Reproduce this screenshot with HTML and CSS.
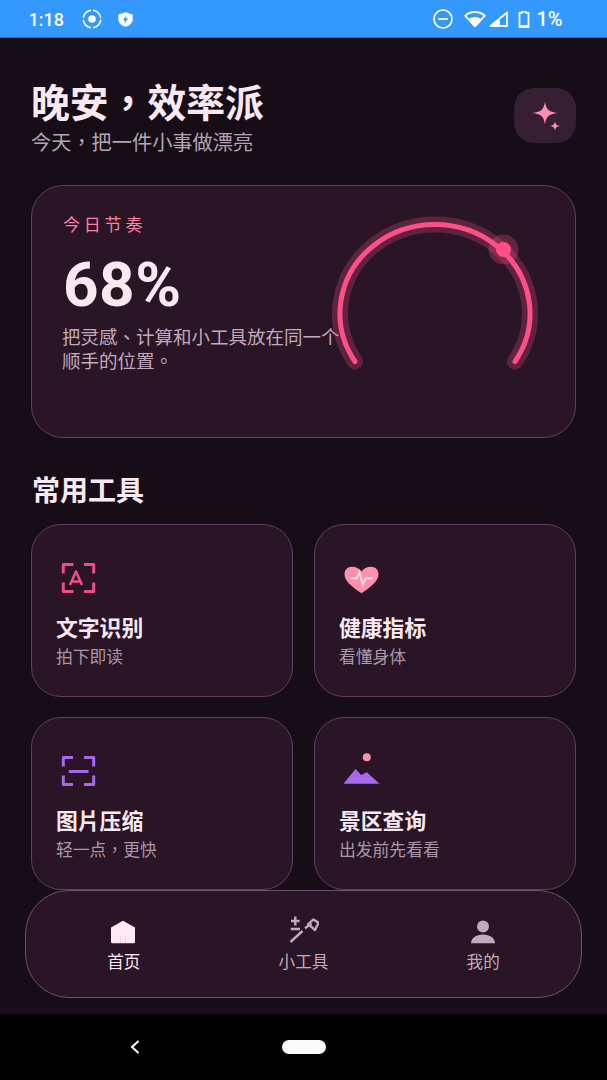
FILE: index.html
```html
<!DOCTYPE html>
<html lang="zh-TW">
<head>
<meta charset="utf-8">
<title>首页</title>
<link rel="stylesheet" href="styles.css">
</head>
<body>
<div class="phone">
  <header class="status">
    <div class="status-left">
      <span class="time">1:18</span>
      <svg class="ic-rec" width="20" height="20" viewBox="0 0 20 20"><circle cx="10" cy="10" r="3.8" fill="#fff"/><circle cx="10" cy="10" r="8.8" fill="none" stroke="#fff" stroke-width="1.6" stroke-dasharray="11.8 2" stroke-dashoffset="-1"/></svg>
      <svg class="ic-shield" width="15" height="15" viewBox="0 0 15 15"><path d="M7.500.3 14.700 2.600V7.500C14.700 11 11.500 13.700 7.500 14.800 3.500 13.700.3 11 .3 7.500V2.600Z" fill="#fff"/><path d="M8.500 3.200 4.800 8.200H7L6.300 11.900 10.200 6.600H7.800Z" fill="#3399ff"/></svg>
    </div>
    <div class="status-right">
      <svg width="20" height="20" viewBox="0 0 20 20"><circle cx="10" cy="10" r="9" fill="none" stroke="#fff" stroke-width="1.700"/><rect x="5.200" y="9.100" width="9.600" height="1.800" fill="#fff"/></svg>
      <svg class="ic-wifi" width="22" height="16" viewBox="0 0 22 16"><path d="M11 15.500 1.200 4.600C3.800 2.300 7.200 1 11 1S18.200 2.300 20.800 4.600Z" fill="none" stroke="#fff" stroke-width="1.800" stroke-linejoin="round"/><path d="M11 15.500 4.700 8.300C6.400 6.900 8.600 6.100 11 6.100S15.600 6.900 17.300 8.300Z" fill="#fff"/></svg>
      <svg class="ic-signal" width="19" height="16" viewBox="0 0 19 16"><path d="M18 1.500V15H1.500Z" fill="none" stroke="#fff" stroke-width="1.800" stroke-linejoin="round"/><path d="M11 7.500V15H2.500Z" fill="#fff"/></svg>
      <svg class="ic-batt" width="12" height="17" viewBox="0 0 12 17"><path d="M4 .5H8V2H10.500V16H1.500V2H4Z" fill="none" stroke="#fff" stroke-width="1.800" stroke-linejoin="round"/><rect x="2" y="14.200" width="8" height="2" fill="#fff"/></svg>
      <span class="pct">1%</span>
    </div>
  </header>

  <main class="screen">
    <section class="greet">
      <div>
        <h1 class="title">晚安，效率派</h1>
        <p class="subtitle">今天，把一件小事做漂亮</p>
      </div>
      <button class="spark-btn" aria-label="灵感">
        <svg width="32" height="32" viewBox="0 0 32 32"><path d="M16 1.500C17 9 19.500 12 28.500 13 19.500 14 17 17 16 24.500 15 17 12.500 14 3.500 13 12.500 12 15 9 16 1.500Z" fill="#ff8fb0"/><path d="M26 21C26.400 24.300 27.500 25.500 31.200 26 27.500 26.500 26.400 27.700 26 31 25.600 27.700 24.500 26.500 20.800 26 24.500 25.500 25.600 24.300 26 21Z" fill="#ff8fb0"/></svg>
      </button>
    </section>

    <section class="hero">
      <div class="hero-text">
        <div class="hero-label">今日节奏</div>
        <div class="hero-value">68%</div>
        <p class="hero-desc">把灵感、计算和小工具放在同一个顺手的位置。</p>
      </div>
      <svg class="gauge" width="230" height="170" viewBox="0 0 230 170">
        <path class="g-halo" d="M27 147.500 A95 89 0 1 1 187 147.500"/>
        <circle cx="175.500" cy="35.500" r="15" fill="#ff4f87" fill-opacity=".28"/>
        <path class="g-line" d="M27 147.500 A95 89 0 1 1 187 147.500"/>
        <circle cx="175.500" cy="35.500" r="7.500" fill="#ff4f87"/>
      </svg>
    </section>

    <h2 class="section-title">常用工具</h2>

    <section class="tools">
      <article class="tool">
        <svg class="tool-ic" width="36" height="32" viewBox="0 0 36 32"><g fill="none" stroke="#ee4d87" stroke-width="3" stroke-linejoin="round"><path d="M12.500 2.500H2.300V11.500M23 2.500H32.700V11.500M2.300 20.500V29.500H12.500M32.700 20.500V29.500H23"/><path d="M9 23 15 9.500 21 23M11 19.500H19" stroke-width="2.600"/></g></svg>
        <h3 class="tool-name">文字识别</h3>
        <p class="tool-sub">拍下即读</p>
      </article>
      <article class="tool">
        <svg class="tool-ic" width="36" height="32" viewBox="0 0 36 32"><path d="M17.500 31.300C7 24 .5 19 .5 12 .5 7.500 4 4.700 8 4.700 12 4.700 15.500 6.500 17.500 9.500 19.500 6.500 23 4.700 27 4.700 31 4.700 34.500 7.500 34.500 12 34.500 19 28 24 17.500 31.300Z" fill="#ff8fab"/><path d="M6.500 16.300H12.800L15.500 10.300 18.800 23 21.500 16.300H28.800" fill="none" stroke="#ffe3ec" stroke-width="1.800"/></svg>
        <h3 class="tool-name">健康指标</h3>
        <p class="tool-sub">看懂身体</p>
      </article>
      <article class="tool">
        <svg class="tool-ic" width="36" height="32" viewBox="0 0 36 32"><g fill="none" stroke="#a868ee" stroke-width="3" stroke-linejoin="round"><path d="M12 2.500H2.300V11.500M23 2.500H32.700V11.500M2.300 20.500V29.500H12M32.700 20.500V29.500H23"/><path d="M7.800 16.500H27.500"/></g></svg>
        <h3 class="tool-name">图片压缩</h3>
        <p class="tool-sub">轻一点，更快</p>
      </article>
      <article class="tool">
        <svg class="tool-ic" width="36" height="32" viewBox="0 0 36 32"><circle cx="22.800" cy="2.300" r="4" fill="#ff8fab"/><path d="M-.5 28.700 11.500 14 17.200 20 22.800 17.300 35.500 28.700Z" fill="#a868ee"/></svg>
        <h3 class="tool-name">景区查询</h3>
        <p class="tool-sub">出发前先看看</p>
      </article>
    </section>

    <nav class="tabbar">
      <a class="tab tab-active">
        <svg width="32" height="32" viewBox="0 0 32 32"><path d="M15 4.700 27 11.500V26A1.200 1.200 0 0 1 25.800 27.200H4.200A1.200 1.200 0 0 1 3 26V11.500Z" fill="#ffeaf3"/><path d="M12.500 27V19.500M17.500 27V19.500" stroke="#e8cfdc" stroke-width=".8"/></svg>
        <span>首页</span>
      </a>
      <a class="tab">
        <svg width="32" height="32" viewBox="0 0 32 32"><g stroke="#c2a9bc" fill="none" stroke-width="2.400"><path d="M3.500 26 15.500 15M3.700 13H13M8.300 .5V9.500M4 5H12.600M18 12.300 24.500 7.500"/><path d="M21.300 8.200 26.300 3.500 31.500 6.700 28 14Z" stroke-linejoin="round"/></g></svg>
        <span>小工具</span>
      </a>
      <a class="tab">
        <svg width="32" height="32" viewBox="0 0 32 32"><circle cx="16" cy="10.500" r="6" fill="#c2a9bc"/><path d="M4 27.300C4 22 9 18.500 16 18.500S28 22 28 27.300Z" fill="#c2a9bc"/></svg>
        <span>我的</span>
      </a>
    </nav>
  </main>

  <footer class="sysnav">
    <svg width="12" height="16" viewBox="0 0 12 16"><path d="M9.500 2 3 8l6.500 6" fill="none" stroke="#fff" stroke-width="2"/></svg>
    <div class="pill"></div>
  </footer>
</div>
</body>
</html>
```

FILE: styles.css
```css
* { box-sizing: border-box; }
html, body { margin: 0; padding: 0; background: #000; }
body { font-family: "Noto Sans CJK TC", "Noto Sans", sans-serif; }
.phone { width: 607px; height: 1080px; display: flex; flex-direction: column; overflow: hidden; }

.status { height: 38px; flex: none; background: #3399ff; border-bottom: 1px solid #2a6fb5; display: flex; align-items: center; justify-content: space-between; padding: 1px 44.5px 0 28.5px; color: #fff; font-family: Roboto, sans-serif; font-size: 18px; font-weight: 500; }
.status-left, .status-right { display: flex; align-items: center; }
.time { width: 35px; }
.ic-rec { margin-left: 18px; }
.ic-shield { margin-left: 16px; }
.ic-wifi { margin-left: 11px; }
.ic-signal { margin-left: 3px; }
.ic-batt { margin-left: 10px; }
.pct { margin-left: 6px; font-size: 20px; }

.screen { position: relative; flex: 1; background: #170d16; padding: 37px 31px 0; }
.greet { display: flex; justify-content: space-between; align-items: flex-start; }
.title { margin: 0; font-size: 38.8px; line-height: 50px; font-weight: 700; color: #f8e8f0; }
.subtitle { margin: 2px 0 0; font-size: 20.2px; line-height: 30px; color: #b8a4b4; }
.spark-btn { width: 62px; height: 55px; margin-top: 13px; border: 0; padding: 0; border-radius: 20px; background: #361f33; display: flex; align-items: center; justify-content: center; }

.hero { position: relative; margin-top: 28px; height: 253px; border-radius: 32px; background: #291526; border: 1.5px solid #633f5d; padding: 23.5px 30px; }
.hero-label { font-size: 17px; line-height: 28px; color: #ff7fa5; letter-spacing: 3.8px; margin-left: 1px; }
.hero-value { font-family: Roboto, sans-serif; font-size: 62px; line-height: 70px; font-weight: 700; letter-spacing: 0.5px; color: #f8e8f0; margin: 12px 0 0 1px; }
.hero-desc { margin: 4.5px 0 0; width: 282px; font-size: 18.5px; line-height: 24px; color: #c2a9bc; }
.gauge { position: absolute; left: 296px; top: 28px; }
.g-halo, .g-line { fill: none; stroke-linecap: round; }
.g-halo { stroke: #ff4f87; stroke-opacity: .25; stroke-width: 16; }
.g-line { stroke: #ff4f87; stroke-width: 5; }

.section-title { margin: 32px 0 0; font-size: 28px; line-height: 38px; font-weight: 700; color: #f8e8f0; padding-left: 1px; }
.tools { display: grid; grid-template-columns: 262px 262px; column-gap: 21px; row-gap: 20px; margin-top: 16px; }
.tool { height: 173px; border-radius: 30px; background: #291526; border: 1.5px solid #633f5d; padding: 36.5px 24px 0; }
.tool-ic { display: block; margin-left: 5px; overflow: visible; }
.tool-name { margin: 18px 0 0; font-size: 21.8px; line-height: 30px; font-weight: 700; color: #f8e8f0; }
.tool-sub { margin: 2px 0 0; font-size: 16.8px; line-height: 24px; color: #ab97a8; }

.tabbar { position: absolute; left: 25px; top: 852px; width: 557px; height: 107.5px; border-radius: 44px; background: #291526; border: 1.5px solid #734f6e; display: grid; grid-template-columns: repeat(3, 1fr); padding: 0 8px; }
.tab { display: flex; flex-direction: column; align-items: center; padding-top: 24.5px; color: #c2a9bc; font-size: 16.6px; line-height: 24px; }
.tab svg { display: block; }
.tab span { margin-top: 1px; }
.tab-active { color: #f8e8f0; }

.sysnav { height: 66px; flex: none; background: #000; position: relative; display: flex; align-items: center; justify-content: center; }
.sysnav svg { position: absolute; left: 129px; top: 25px; }
.pill { width: 44px; height: 14px; border-radius: 7px; background: #fafafa; }
```
